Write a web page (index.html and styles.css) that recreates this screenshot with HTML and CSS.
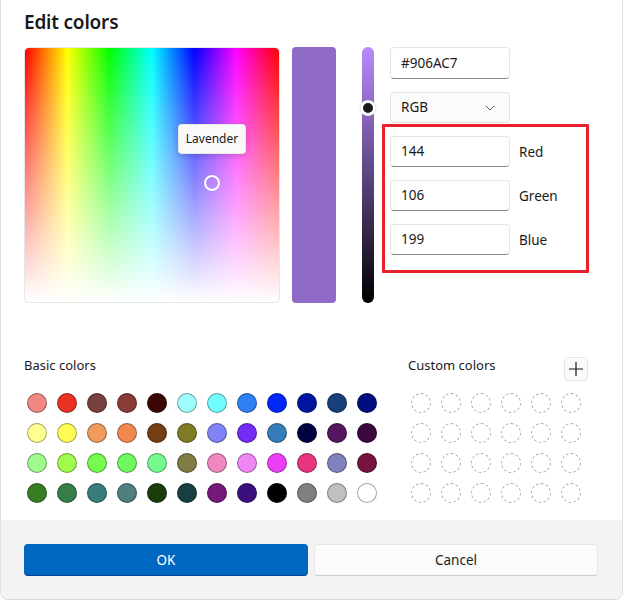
FILE: index.html
```html
<!DOCTYPE html>
<html>
<head>
<meta charset="utf-8">
<link rel="stylesheet" href="styles.css">
</head>
<body>
<div class="dialog">
  <div class="content">
    <h1 class="title">Edit colors</h1>
    <div class="top">
      <div class="spectrum">
        <div class="tooltip">Lavender</div>
        <div class="picker"></div>
      </div>
      <div class="preview"></div>
      <div class="slider"><div class="knob"></div></div>
      <div class="controls">
        <div class="field hex">#906AC7</div>
        <div class="field dropdown"><span>RGB</span>
          <svg class="chev" width="10" height="6" viewBox="0 0 10 6"><path d="M0.8 0.8 L5 5 L9.2 0.8" fill="none" stroke="#555" stroke-width="1"/></svg>
        </div>
        <div class="highlight">
          <div class="rgbrow"><div class="field num">144</div><span class="lbl">Red</span></div>
          <div class="rgbrow"><div class="field num">106</div><span class="lbl">Green</span></div>
          <div class="rgbrow"><div class="field num">199</div><span class="lbl">Blue</span></div>
        </div>
      </div>
    </div>
    <div class="bottom">
      <div class="basic">
        <div class="label">Basic colors</div>
        <div class="grid basicgrid">
          <span class="dot" style="background:#f08782"></span>
          <span class="dot" style="background:#ea3323"></span>
          <span class="dot" style="background:#774040"></span>
          <span class="dot" style="background:#8a3c36"></span>
          <span class="dot" style="background:#3a0704"></span>
          <span class="dot" style="background:#a0fbfd"></span>
          <span class="dot" style="background:#73fcfd"></span>
          <span class="dot" style="background:#3080f5"></span>
          <span class="dot" style="background:#0127fa"></span>
          <span class="dot" style="background:#0016a0"></span>
          <span class="dot" style="background:#173f7b"></span>
          <span class="dot" style="background:#000f80"></span>

          <span class="dot" style="background:#fffe91"></span>
          <span class="dot" style="background:#fffc55"></span>
          <span class="dot" style="background:#f09a5b"></span>
          <span class="dot" style="background:#f0884f"></span>
          <span class="dot" style="background:#743f15"></span>
          <span class="dot" style="background:#807b24"></span>
          <span class="dot" style="background:#8083f5"></span>
          <span class="dot" style="background:#752cf5"></span>
          <span class="dot" style="background:#357db8"></span>
          <span class="dot" style="background:#00023f"></span>
          <span class="dot" style="background:#541660"></span>
          <span class="dot" style="background:#3b0940"></span>

          <span class="dot" style="background:#a0fb8e"></span>
          <span class="dot" style="background:#a0fb4f"></span>
          <span class="dot" style="background:#74fb4c"></span>
          <span class="dot" style="background:#70f95e"></span>
          <span class="dot" style="background:#75fa8d"></span>
          <span class="dot" style="background:#807c45"></span>
          <span class="dot" style="background:#ef88be"></span>
          <span class="dot" style="background:#ee87f3"></span>
          <span class="dot" style="background:#ea3ff7"></span>
          <span class="dot" style="background:#e93580"></span>
          <span class="dot" style="background:#7f82bb"></span>
          <span class="dot" style="background:#75153f"></span>

          <span class="dot" style="background:#377d22"></span>
          <span class="dot" style="background:#377d47"></span>
          <span class="dot" style="background:#367d7c"></span>
          <span class="dot" style="background:#4f7f7e"></span>
          <span class="dot" style="background:#193e0b"></span>
          <span class="dot" style="background:#183f40"></span>
          <span class="dot" style="background:#751a7a"></span>
          <span class="dot" style="background:#3a0f7c"></span>
          <span class="dot" style="background:#000000"></span>
          <span class="dot" style="background:#808080"></span>
          <span class="dot" style="background:#c0c0c0"></span>
          <span class="dot" style="background:#ffffff"></span>
        </div>
      </div>
      <div class="custom">
        <div class="customhead">
          <div class="label">Custom colors</div>
          <div class="plus">
            <svg width="16" height="16" viewBox="0 0 16 16"><path d="M8 1 V15 M1 8 H15" stroke="#1a1a1a" stroke-width="1.2" fill="none"/></svg>
          </div>
        </div>
        <div class="grid customgrid">
          <span class="empty"></span><span class="empty"></span><span class="empty"></span><span class="empty"></span><span class="empty"></span><span class="empty"></span>
          <span class="empty"></span><span class="empty"></span><span class="empty"></span><span class="empty"></span><span class="empty"></span><span class="empty"></span>
          <span class="empty"></span><span class="empty"></span><span class="empty"></span><span class="empty"></span><span class="empty"></span><span class="empty"></span>
          <span class="empty"></span><span class="empty"></span><span class="empty"></span><span class="empty"></span><span class="empty"></span><span class="empty"></span>
        </div>
      </div>
    </div>
  </div>
  <div class="footer">
    <button class="btn primary">OK</button>
    <button class="btn secondary">Cancel</button>
  </div>
</div>
</body>
</html>
```
FILE: styles.css
```css
* { box-sizing: border-box; }
html, body { margin: 0; padding: 0; background: #fff; }
body {
  font-family: "Noto Sans", "Open Sans", sans-serif;
  color: #1a1a1a;
  font-size: 14px;
}
.dialog {
  width: 623px;
  height: 600px;
  display: flex;
  flex-direction: column;
  border-left: 1px solid #e0e0e0;
  border-right: 1px solid #e0e0e0;
  border-bottom: 1px solid #d8d8d8;
  border-radius: 0 0 8px 8px;
  overflow: hidden;
  background: #fff;
}
.content {
  height: 520px;
  padding: 8px 0 0 23px;
}
.title {
  margin: 0;
  font-size: 19px;
  font-weight: 600;
  line-height: 28px;
  letter-spacing: -0.2px;
}
.top {
  display: flex;
  margin-top: 11px;
  height: 256px;
}
.spectrum {
  position: relative;
  width: 256px;
  height: 256px;
  border-radius: 5px;
  border: 1px solid #e6e6e6;
  background:
    linear-gradient(to bottom, rgba(255,255,255,0), #fff),
    linear-gradient(to right, #f00 0%, #ff0 16.67%, #0f0 33.33%, #0ff 50%, #00f 66.67%, #f0f 83.33%, #f00 100%);
}
.tooltip {
  position: absolute;
  left: 153px;
  top: 76px;
  width: 68px;
  height: 30px;
  background: #f9f9f9;
  border: 1px solid rgba(0,0,0,0.06);
  border-radius: 4px;
  box-shadow: 0 2px 6px rgba(0,0,0,0.16);
  font-size: 12px;
  line-height: 28px;
  text-align: center;
  color: #1a1a1a;
}
.picker {
  position: absolute;
  left: 179px;
  top: 127px;
  width: 16px;
  height: 16px;
  border: 2px solid #fff;
  border-radius: 50%;
  box-shadow: 0 0 1px rgba(0,0,0,0.3);
}
.preview {
  width: 44px;
  height: 256px;
  margin-left: 12px;
  border-radius: 4px;
  background: #906AC7;
}
.slider {
  position: relative;
  width: 12px;
  height: 256px;
  margin-left: 26px;
  border-radius: 6px;
  background: linear-gradient(to bottom, #b98aff, #000);
}
.knob {
  position: absolute;
  left: -2px;
  top: 53px;
  width: 16px;
  height: 16px;
  border-radius: 50%;
  background: #1a1a1a;
  border: 3px solid #fff;
  box-shadow: 0 0 1px rgba(0,0,0,0.4);
}
.controls {
  margin-left: 16px;
  display: flex;
  flex-direction: column;
}
.field {
  width: 120px;
  height: 31px;
  background: #fff;
  border: 1px solid #e5e5e5;
  border-bottom-color: #8a8a8a;
  border-radius: 4px;
  padding-left: 10px;
  line-height: 29px;
  font-size: 13.5px;
  color: #1a1a1a;
}
.hex { height: 32px; line-height: 30px; }
.dropdown {
  margin-top: 13px;
  background: #fbfbfb;
  border-bottom-color: #e0e0e0;
  display: flex;
  align-items: center;
  justify-content: space-between;
  padding-right: 14px;
}
.chev { display: block; }
.highlight {
  margin-top: 1px;
  margin-left: -8px;
  width: 207px;
  border: 3px solid #e8202a;
  border-radius: 1px;
  padding: 9px 0 15px 5px;
  display: flex;
  flex-direction: column;
  gap: 13px;
}
.rgbrow {
  display: flex;
  align-items: center;
}
.lbl {
  margin-left: 9px;
  font-size: 13.5px;
}
.bottom {
  display: flex;
  margin-top: 52px;
}
.basic { width: 384px; }
.label {
  font-size: 13px;
  line-height: 20px;
  height: 20px;
}
.grid {
  display: grid;
  gap: 10px;
  margin-top: 18px;
  padding-left: 3px;
}
.basicgrid { grid-template-columns: repeat(12, 20px); }
.customgrid { grid-template-columns: repeat(6, 20px); margin-top: 12px; padding-left: 3px; }
.dot, .empty {
  display: block;
  width: 20px;
  height: 20px;
  border-radius: 50%;
}
.dot { border: 1px solid rgba(0,0,0,0.35); }
.empty { border: 1px dashed #a8a8a8; }
.custom { width: 180px; }
.customhead {
  display: flex;
  justify-content: space-between;
  align-items: flex-start;
}
.plus {
  margin-top: 2px;
  width: 24px;
  height: 24px;
  border: 1px solid #e5e5e5;
  border-radius: 4px;
  background: #fbfbfb;
  display: flex;
  align-items: center;
  justify-content: center;
}
.footer {
  flex: 1;
  background: #f3f3f3;
  padding: 24px 24px 0 23px;
  display: flex;
  gap: 6px;
  align-items: flex-start;
}
.btn {
  flex: 1;
  height: 32px;
  border-radius: 4px;
  font-family: "Noto Sans", "Open Sans", sans-serif;
  font-size: 13.5px;
  cursor: default;
}
.primary {
  background: #0067c0;
  color: #fff;
  border: 1px solid #0067c0;
  border-bottom-color: #003e92;
}
.secondary {
  background: #fbfbfb;
  color: #1a1a1a;
  border: 1px solid #e5e5e5;
  border-bottom-color: #cccccc;
}
```
